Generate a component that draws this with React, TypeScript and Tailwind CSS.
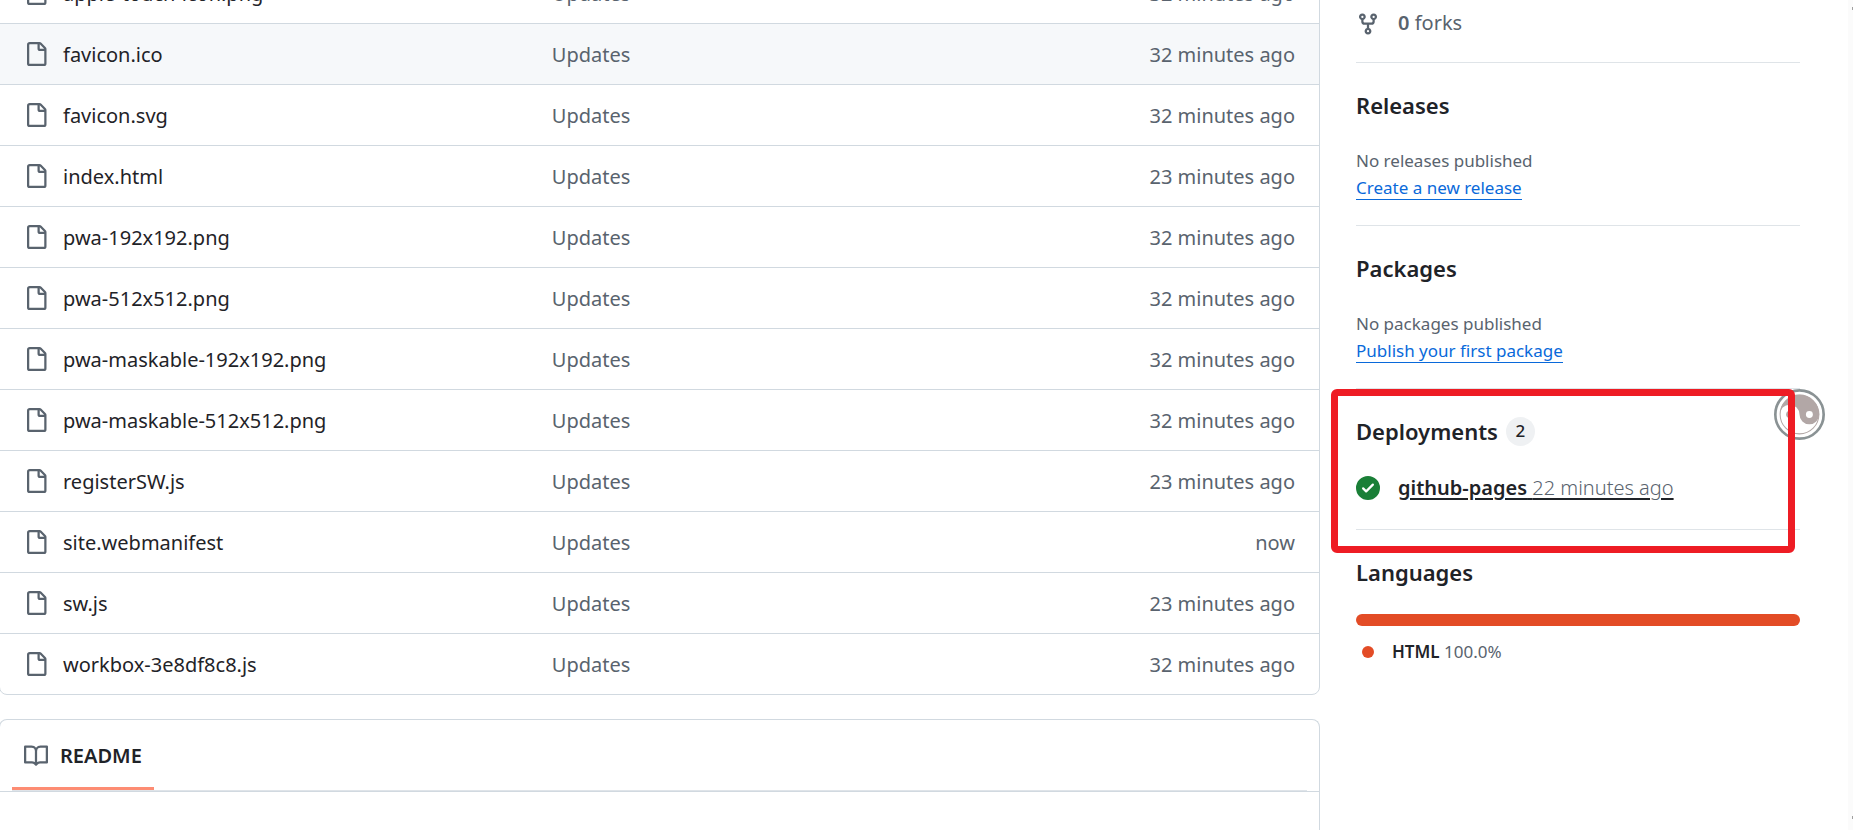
import React from "react";

const FILE =
  "M2 1.75C2 .784 2.784 0 3.75 0h6.586c.464 0 .909.184 1.237.513l2.914 2.914c.329.328.513.773.513 1.237v9.586A1.75 1.75 0 0 1 13.25 16h-9.5A1.75 1.75 0 0 1 2 14.25Zm1.75-.25a.25.25 0 0 0-.25.25v12.5c0 .138.112.25.25.25h9.5a.25.25 0 0 0 .25-.25V6h-2.75A1.75 1.75 0 0 1 9 4.25V1.5Zm6.75.062V4.25c0 .138.112.25.25.25h2.688l-.011-.013-2.914-2.914-.013-.011Z";
const FORK =
  "M5 5.372v.878c0 .414.336.75.75.75h4.5a.75.75 0 0 0 .75-.75v-.878a2.25 2.25 0 1 1 1.5 0v.878a2.25 2.25 0 0 1-2.25 2.25h-1.5v2.128a2.251 2.251 0 1 1-1.5 0V8.5h-1.5A2.25 2.25 0 0 1 3.5 6.25v-.878a2.25 2.25 0 1 1 1.5 0ZM5 3.25a.75.75 0 1 0-1.5 0 .75.75 0 0 0 1.5 0Zm6.75.75a.75.75 0 1 0 0-1.5.75.75 0 0 0 0 1.5Zm-3 8.75a.75.75 0 1 0-1.5 0 .75.75 0 0 0 1.5 0Z";
const BOOK =
  "M0 1.75A.75.75 0 0 1 .75 1h4.253c1.227 0 2.317.59 3 1.501A3.743 3.743 0 0 1 11.006 1h4.245a.75.75 0 0 1 .75.75v10.5a.75.75 0 0 1-.75.75h-4.507a2.25 2.25 0 0 0-1.591.659l-.622.621a.75.75 0 0 1-1.06 0l-.622-.621A2.25 2.25 0 0 0 5.258 13H.75a.75.75 0 0 1-.75-.75Zm7.251 10.324.004-5.073-.002-2.253A2.25 2.25 0 0 0 5.003 2.5H1.5v9h3.757a3.75 3.75 0 0 1 1.994.574ZM8.755 4.75l-.004 7.322a3.752 3.752 0 0 1 1.992-.572H14.5v-9h-3.495a2.25 2.25 0 0 0-2.25 2.25Z";
const CHECK =
  "M8 16A8 8 0 1 1 8 0a8 8 0 0 1 0 16Zm3.78-9.72a.751.751 0 0 0-.018-1.042.751.751 0 0 0-1.042-.018L6.75 9.19 5.28 7.72a.751.751 0 0 0-1.042.018.751.751 0 0 0-.018 1.042l2 2a.75.75 0 0 0 1.06 0Z";

function Icon({ d, className }: { d: string; className: string }) {
  return (
    <svg viewBox="0 0 16 16" fill="currentColor" aria-hidden="true" className={className}>
      <path d={d} />
    </svg>
  );
}

type Entry = { name: string; age: string; active?: boolean };

const files: Entry[] = [
  { name: "apple-touch-icon.png", age: "32 minutes ago" },
  { name: "favicon.ico", age: "32 minutes ago", active: true },
  { name: "favicon.svg", age: "32 minutes ago" },
  { name: "index.html", age: "23 minutes ago" },
  { name: "pwa-192x192.png", age: "32 minutes ago" },
  { name: "pwa-512x512.png", age: "32 minutes ago" },
  { name: "pwa-maskable-192x192.png", age: "32 minutes ago" },
  { name: "pwa-maskable-512x512.png", age: "32 minutes ago" },
  { name: "registerSW.js", age: "23 minutes ago" },
  { name: "site.webmanifest", age: "now" },
  { name: "sw.js", age: "23 minutes ago" },
  { name: "workbox-3e8df8c8.js", age: "32 minutes ago" },
];

function FileTable() {
  return (
    <div className="-mt-[39px] shrink-0 overflow-hidden rounded-b-lg border border-[#d1d9e0]">
      <table className="w-full table-fixed border-separate border-spacing-0 text-xl leading-[30px]">
        <colgroup>
          <col className="w-[41%]" />
          <col />
          <col className="w-[240px]" />
        </colgroup>
        <tbody className="[&>tr+tr>td]:border-t [&>tr+tr>td]:border-[#d1d9e0]">
          {files.map((f) => (
            <tr key={f.name} className={f.active ? "h-[61px] bg-[#f6f8fa]" : "h-[61px]"}>
              <td className="py-0 pl-6">
                <a href="#file" className="flex items-center gap-[15px]">
                  <Icon d={FILE} className="size-6 shrink-0 text-[#59636e]" />
                  <span className="pt-0.5">{f.name}</span>
                </a>
              </td>
              <td className="pt-0.5 pb-0 pl-[11px] text-[#59636e]">
                <a href="#commit">Updates</a>
              </td>
              <td className="pt-0.5 pr-6 pb-0 text-right text-[#59636e]">{f.age}</td>
            </tr>
          ))}
        </tbody>
      </table>
    </div>
  );
}

function Readme() {
  return (
    <section className="mt-6 flex-1 rounded-t-lg border border-b-0 border-[#d1d9e0]">
      <div className="border-b border-[#d1d9e0] px-3">
        <nav className="flex h-[71px] border-b border-[#dfe4e9]">
          <a
            href="#readme"
            className="flex items-center gap-3 border-b-3 border-[#fd8c73] px-3 pt-1 text-xl font-semibold"
          >
            <Icon d={BOOK} className="size-6 text-[#59636e]" />
            README
          </a>
        </nav>
      </div>
    </section>
  );
}

function Empty({ title, note, action }: { title: string; note: string; action: string }) {
  return (
    <section className="h-[163px] border-b border-[#dfe4e8] pt-6">
      <h2 className="text-[22px] leading-9 font-semibold">{title}</h2>
      <p className="mt-6 text-[17px] leading-[27px] text-[#59636e]">{note}</p>
      <a
        href="#new"
        className="inline-block border-b border-[#0969da] pt-0.5 text-[17px] leading-[23px] text-[#0969da]"
      >
        {action}
      </a>
    </section>
  );
}

function FloatingBadge() {
  return (
    <svg viewBox="0 0 50 50" aria-hidden="true" className="absolute top-0 -right-[25px] size-[51px]">
      <circle cx="25" cy="25" r="23.7" fill="#fff" stroke="#8a9294" strokeWidth="2.6" />
      <circle cx="25" cy="25" r="19" fill="#fff" stroke="#b2a7a6" strokeWidth="1" />
      <path
        d="M5.7 25A19.3 19.3 0 0 1 44.3 25A9.65 9.65 0 0 1 25 25A9.65 9.65 0 0 0 5.7 25Z"
        fill="#b2a7a6"
      />
      <circle cx="15.3" cy="25" r="3.4" fill="#b2a7a6" />
      <circle cx="34.7" cy="25" r="3.4" fill="#fff" />
    </svg>
  );
}

export default function App() {
  return (
    <div className="flex h-screen overflow-hidden bg-white font-['Noto_Sans','Open_Sans',sans-serif] text-[#1f2328]">
      <main className="-ml-px flex min-w-0 flex-1 flex-col">
        <FileTable />
        <Readme />
      </main>
      <aside className="mr-12 ml-9 w-[444px] shrink-0">
        <div className="flex h-[63px] items-start gap-[18px] border-b border-[#dfe4e8] pt-2 text-xl leading-[30px] text-[#59636e]">
          <Icon d={FORK} className="mt-1 size-6" />
          <a href="#forks">
            <strong className="font-semibold">0</strong> forks
          </a>
        </div>
        <Empty title="Releases" note="No releases published" action="Create a new release" />
        <Empty title="Packages" note="No packages published" action="Publish your first package" />
        <section className="relative h-[141px] border-b border-[#dfe4e8] pt-6">
          <h2 className="flex items-center gap-2 text-[22px] leading-9 font-semibold">
            Deployments
            <span className="flex size-[29px] items-center justify-center rounded-full bg-[#eff1f3] text-[17px] font-medium">
              2
            </span>
          </h2>
          <a href="#deployments" className="mt-6 flex items-center gap-[18px] text-xl leading-[30px]">
            <Icon d={CHECK} className="size-6 text-[#1a7f37]" />
            <span className="underline decoration-2 underline-offset-3">
              <span className="font-semibold">github-pages</span>{" "}
              <span className="font-light text-[#59636e]">22 minutes ago</span>
            </span>
          </a>
          <FloatingBadge />
          <div className="pointer-events-none absolute top-0 right-[5px] -bottom-6 -left-[25px] rounded-md border-7 border-[#ee1c24]" />
        </section>
        <section className="pt-6">
          <h2 className="text-[22px] leading-9 font-semibold">Languages</h2>
          <div className="mt-6 h-3 rounded-full bg-[#e34c26]" />
          <p className="mt-3 flex items-center gap-[18px] pl-1.5 text-[17px] leading-[27px]">
            <span className="size-3 rounded-full bg-[#e34c26]" />
            <span>
              <span className="font-semibold">HTML</span>{" "}
              <span className="text-[#59636e]">100.0%</span>
            </span>
          </p>
        </section>
      </aside>
      <div className="flex w-[5px] shrink-0 flex-col items-end justify-between bg-[#fbfbfb] pt-[7px] pb-[11px]">
        <span className="h-[3px] w-px bg-[#a0a0a0]" />
        <span className="h-[3px] w-px bg-[#a0a0a0]" />
      </div>
    </div>
  );
}
